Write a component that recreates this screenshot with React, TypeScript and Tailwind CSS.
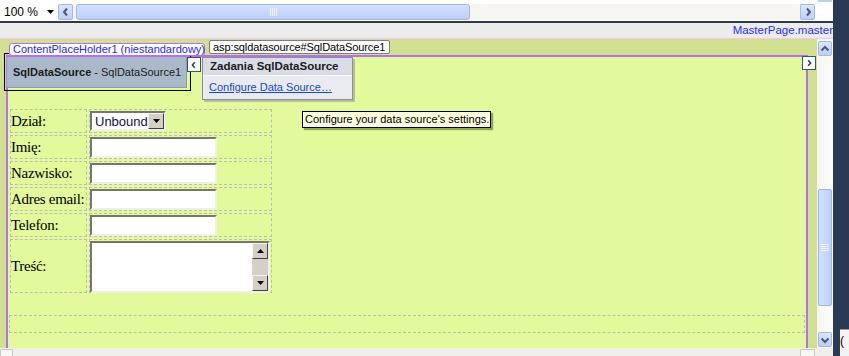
import React from "react";

// ── Small drawing helpers ─────────────────────────────────────────────────────

type Dir = "left" | "right" | "up" | "down";

const CHEVRON: Record<Dir, string> = {
  left: "M6 1.5 L3 5 L6 8.5",
  right: "M4 1.5 L7 5 L4 8.5",
  up: "M1.5 6.5 L5 3 L8.5 6.5",
  down: "M1.5 3.5 L5 7 L8.5 3.5",
};

function Chevron({ dir, color = "#4a5870", size = 10 }: { dir: Dir; color?: string; size?: number }) {
  return (
    <svg width={size} height={size} viewBox="0 0 10 10">
      <path d={CHEVRON[dir]} fill="none" stroke={color} strokeWidth="2" />
    </svg>
  );
}

function Triangle({ dir }: { dir: "up" | "down" }) {
  return (
    <svg width="7" height="4" viewBox="0 0 7 4">
      <path d={dir === "up" ? "M0 4 L3.5 0 L7 4 Z" : "M0 0 L7 0 L3.5 4 Z"} fill="#000" />
    </svg>
  );
}

function BlueButton({ dir, className = "" }: { dir: Dir; className?: string }) {
  return (
    <div
      className={`flex items-center justify-center rounded-[2px] border border-[#a2b8e6] bg-gradient-to-b from-[#dbe6fd] to-[#bccff7] ${className}`}
    >
      <Chevron dir={dir} />
    </div>
  );
}

function Grip({ vertical }: { vertical?: boolean }) {
  return vertical ? (
    <svg width="8" height="7" viewBox="0 0 8 7">
      {[0.5, 2.5, 4.5, 6.5].map((y) => (
        <line key={y} x1="0" x2="8" y1={y} y2={y} stroke="#eef3ff" strokeWidth="1" />
      ))}
    </svg>
  ) : (
    <svg width="7" height="8" viewBox="0 0 7 8">
      {[0.5, 2.5, 4.5, 6.5].map((x) => (
        <line key={x} y1="0" y2="8" x1={x} x2={x} stroke="#eef3ff" strokeWidth="1" />
      ))}
    </svg>
  );
}

// ── Classic form controls ─────────────────────────────────────────────────────

const inset =
  "border-2 border-t-[#77776f] border-l-[#77776f] border-b-[#f1f0e8] border-r-[#f1f0e8] bg-white";

const outset =
  "border border-t-[#f4f3ee] border-l-[#f4f3ee] border-b-[#404040] border-r-[#404040] bg-[#d4d0c8]";

function TextBox() {
  return <div className={`mt-px h-[21px] w-[127px] ${inset}`} />;
}

function Select() {
  return (
    <div className={`mt-px flex h-[20px] w-[76px] items-center justify-between ${inset}`}>
      <span className="pl-[3px] font-['Liberation_Sans',Arial,sans-serif] text-[13px] leading-none text-[#12124a]">
        Unbound
      </span>
      <div className={`flex h-[16px] w-[16px] items-center justify-center ${outset}`}>
        <Triangle dir="down" />
      </div>
    </div>
  );
}

function TextArea() {
  return (
    <div className={`mt-px flex h-[52px] w-[180px] justify-end ${inset}`}>
      <div className="flex w-[16px] flex-col bg-[#e2dfd8]">
        <div className={`flex h-[16px] items-center justify-center ${outset}`}>
          <Triangle dir="up" />
        </div>
        <div className="flex-1 bg-[#d4d0c8]" />
        <div className={`flex h-[16px] items-center justify-center ${outset}`}>
          <Triangle dir="down" />
        </div>
      </div>
    </div>
  );
}

const FIELDS: { label: string; control: React.ReactNode; tall?: boolean }[] = [
  { label: "Dział:", control: <Select /> },
  { label: "Imię:", control: <TextBox /> },
  { label: "Nazwisko:", control: <TextBox /> },
  { label: "Adres email:", control: <TextBox /> },
  { label: "Telefon:", control: <TextBox /> },
  { label: "Treść:", control: <TextArea />, tall: true },
];

const cell = "border border-dashed border-[#bdbfb2]";

// ── Page ──────────────────────────────────────────────────────────────────────

export default function App() {
  const ui = "font-['Liberation_Sans',Tahoma,sans-serif]";

  return (
    <div className={`flex h-[356px] w-[849px] overflow-hidden bg-white ${ui}`}>
      <div className="flex w-[833px] flex-col">
        {/* zoom combo + horizontal scroller */}
        <div className="relative flex h-[21px] shrink-0 bg-white">
          <div className="mt-[3px] flex h-[17px] w-[57px] items-center justify-between bg-white pl-[4px] pr-[3px]">
            <span className="text-[12px] leading-none text-black">100 %</span>
            <Triangle dir="down" />
          </div>
          <div className="ml-px mt-[4px] flex h-[16px] w-[757px] bg-[#f6f5f0]">
            <BlueButton dir="left" className="w-[15px]" />
            <div className="ml-[3px] flex w-[394px] items-center justify-center rounded-[3px] border border-[#9fb5e6] bg-gradient-to-b from-[#d3e0fd] to-[#bcd0f8]">
              <Grip />
            </div>
            <div className="flex-1" />
            <BlueButton dir="right" className="w-[15px]" />
          </div>
          <div className="ml-[3px] h-[2px] w-[14px] bg-[#bccff7]" />
        </div>
        <div className="h-[2px] shrink-0 bg-[#2d3a48]" />

        {/* master page bar */}
        <div className="flex h-[15px] shrink-0 items-center justify-end bg-[#ececec]">
          <span className="text-[11.5px] leading-none text-[#2b2bff]">MasterPage.master</span>
        </div>
        <div className="h-px shrink-0 bg-[#f3c6f3]" />

        {/* designer surface */}
        <div className="flex h-[309px] shrink-0">
          <div className="relative flex w-[817px] flex-col bg-[#d0e08e] pl-[6px] pt-[16px]">
            <div className="flex w-[802px] flex-1 flex-col border-x-2 border-t-2 border-[#b46ff2] bg-[#e2fa9b] pl-[2px] pt-[52px]">
              <div className="grid w-max grid-cols-[77px_183px] gap-[2px]">
                {FIELDS.map((f) => (
                  <React.Fragment key={f.label}>
                    <div
                      className={`${cell} flex items-center whitespace-nowrap font-['Liberation_Serif','Times_New_Roman',serif] text-[15px] leading-none tracking-[-0.3px] text-black ${
                        f.tall ? "h-[54px]" : "h-[24px]"
                      }`}
                    >
                      {f.label}
                    </div>
                    <div className={`${cell} ${f.tall ? "h-[54px]" : "h-[24px]"}`}>{f.control}</div>
                  </React.Fragment>
                ))}
              </div>
              <div className={`${cell} ml-[-1px] mt-[22px] h-[18px] w-[796px]`} />
            </div>

            {/* ContentPlaceHolder tab */}
            <div className="absolute left-[9px] top-[4px] z-20 flex h-[13px] w-[196px] items-center rounded-[3px] border border-[#b46ff2] bg-white pl-[3px]">
              <span className="whitespace-nowrap text-[11px] leading-none text-[#2626ff]">
                ContentPlaceHolder1 (niestandardowy)
              </span>
            </div>

            {/* element path tab */}
            <div className="absolute left-[209px] top-[1px] z-20 flex h-[14px] w-[181px] items-center rounded-[2px] border border-[#7c7c7c] bg-white pl-[3px]">
              <span className="whitespace-nowrap text-[11px] leading-none tracking-[-0.1px] text-black">
                asp:sqldatasource#SqlDataSource1
              </span>
            </div>

            {/* SqlDataSource control */}
            <div className="absolute left-[4px] top-[14px] z-10 h-[38px] w-[187px] border border-black" />
            <div className="absolute left-[7px] top-[18px] z-10 flex h-[31px] w-[180px] items-center border-b border-r border-[#8d9cab] bg-[#a9b9c9] pl-[6px]">
              <span className="whitespace-nowrap text-[11px] leading-none text-[#1c1c1c]">
                <b>SqlDataSource</b> - SqlDataSource1
              </span>
            </div>
            <div className="absolute left-[187px] top-[18px] z-20 flex h-[15px] w-[14px] items-center justify-center border border-[#3d5165] bg-white">
              <Chevron dir="left" color="#33414f" size={8} />
            </div>

            {/* smart tag panel */}
            <div className="absolute left-[202px] top-[18px] z-20 flex h-[43px] w-[151px] flex-col border border-[#8e8e98] bg-[#eaebf0] shadow-[2px_2px_0_#b8bca0]">
              <div className="flex h-[18px] items-center border-b border-[#f6f7fa] bg-[#d9dce5] pl-[7px]">
                <span className="whitespace-nowrap text-[11.5px] font-bold leading-none text-[#202020]">
                  Zadania SqlDataSource
                </span>
              </div>
              <div className="flex flex-1 items-center pl-[6px]">
                <span className="whitespace-nowrap text-[11px] leading-none text-[#1446d8] underline">
                  Configure Data Source…
                </span>
              </div>
            </div>

            {/* tooltip */}
            <div className="absolute left-[302px] top-[72px] z-20 flex h-[17px] w-[189px] items-center border border-black bg-[#ffffe1] pl-[2px] shadow-[2px_2px_1px_rgba(80,90,40,0.55)]">
              <span className="whitespace-nowrap text-[11px] leading-none text-black">
                Configure your data source's settings.
              </span>
            </div>

            {/* right chevron */}
            <div className="absolute left-[802px] top-[17px] z-20 flex h-[14px] w-[14px] items-center justify-center border border-[#2f5a6f] bg-white">
              <Chevron dir="right" color="#33414f" size={8} />
            </div>
          </div>

          {/* vertical scroller */}
          <div className="flex w-[16px] flex-col bg-gradient-to-r from-[#f6f5f1] to-[#fdfdfb] pl-px pt-[2px]">
            <BlueButton dir="up" className="h-[15px] w-[14px]" />
            <div className="mt-[133px] flex h-[117px] w-[14px] items-center justify-center rounded-[2px] border border-[#9fb5e6] bg-gradient-to-r from-[#d3e0fd] to-[#bcd0f8]">
              <Grip vertical />
            </div>
            <div className="flex-1" />
            <BlueButton dir="down" className="mb-[1px] h-[15px] w-[14px]" />
          </div>
        </div>

        {/* bottom scroller edge */}
        <div className="flex flex-1 items-end bg-[#f0efea]">
          <div className="h-[7px] w-[13px] rounded-t-[2px] border border-b-0 border-[#c9c8c2] bg-[#f6f6f2]" />
          <div className="ml-[787px] h-[7px] w-[15px] rounded-t-[2px] border border-b-0 border-[#c9c8c2] bg-[#f6f6f2]" />
        </div>
      </div>

      {/* window edge */}
      <div className="flex w-[16px] flex-col bg-[#2a3a55]">
        <div className="flex-1" />
        <div className="ml-[7px] h-[27px] border-t border-[#9a9a9a] bg-[#f3f3f3] pt-[5px] text-[12px] leading-none text-black">
          (
        </div>
      </div>
    </div>
  );
}
